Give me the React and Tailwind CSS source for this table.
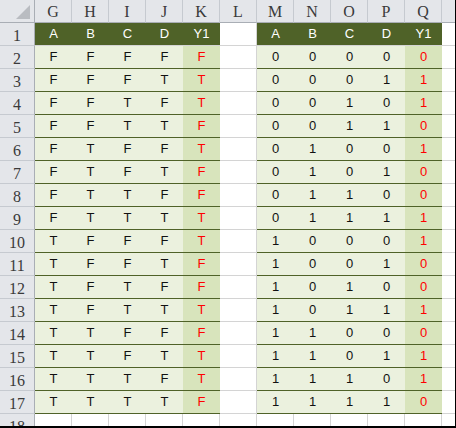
import React from "react";

const LEFT = [
  "FFFFF","FFFTT","FFTFT","FFTTF","FTFFT","FTFTF","FTTFF","FTTTT",
  "TFFFT","TFFTF","TFTFF","TFTTT","TTFFF","TTFTT","TTTFT","TTTTF",
];
const COLS = ["G","H","I","J","K","L","M","N","O","P","Q",""];
const HEAD = ["A","B","C","D","Y1"];

function HeadCell({ children }) {
  return (
    <div className="w-[37px] h-[23px] shrink-0 box-border border-r border-b border-r-[#c6cad0] border-b-[#a9aeb5] bg-[#e4e6ea] flex items-center justify-center pt-[2px] text-[16px] text-[#3a3a3a] [font-family:'Liberation_Serif',serif]">
      {children}
    </div>
  );
}

function RowNum({ n }) {
  return (
    <div className="w-[35px] h-[23px] shrink-0 box-border border-r border-b border-r-[#a9aeb5] border-b-[#c6cad0] bg-[#e4e6ea] flex items-center justify-center pt-[4px] text-[16px] text-[#3a3a3a] [font-family:'Liberation_Serif',serif]">
      {n}
    </div>
  );
}

function Blank() {
  return <div className="w-[37px] h-[23px] shrink-0 box-border border-r border-b border-[#d4d4d4] bg-white" />;
}

function DarkCell({ children }) {
  return (
    <div className="w-[37px] h-[23px] shrink-0 box-border border-b border-b-[#d4d4d4] bg-[#4f6228] flex items-center justify-center text-[13px] text-white [font-family:'Liberation_Sans',sans-serif]">
      {children}
    </div>
  );
}

function DataCell({ children, y }) {
  return (
    <div
      className={
        y
          ? "w-[37px] h-[23px] shrink-0 box-border border-b border-b-[#4f6228] bg-[#d8e4bc] flex items-center justify-center text-[13px] text-[#ff0000] [font-family:'Liberation_Sans',sans-serif]"
          : "w-[37px] h-[23px] shrink-0 box-border border-b border-b-[#4f6228] bg-[#ebf1de] flex items-center justify-center text-[13px] text-[#111] [font-family:'Liberation_Sans',sans-serif]"
      }
    >
      {children}
    </div>
  );
}

function Table({ row, numeric }) {
  if (row === 1) {
    return HEAD.map((h) => <DarkCell key={h}>{h}</DarkCell>);
  }
  if (row >= 2 && row <= 17) {
    const s = LEFT[row - 2];
    return s.split("").map((c, i) => (
      <DataCell key={i} y={i === 4}>
        {numeric ? (c === "T" ? "1" : "0") : c}
      </DataCell>
    ));
  }
  return [0, 1, 2, 3, 4].map((i) => <Blank key={i} />);
}

export default function App() {
  const rows = Array.from({ length: 18 }, (_, i) => i + 1);
  return (
    <div className="w-[456px] h-[428px] box-border border-r border-b-2 border-black overflow-hidden bg-white">
      <div className="flex w-max">
        <div className="w-[35px] h-[23px] shrink-0 box-border border-r border-b border-r-[#a9aeb5] border-b-[#a9aeb5] bg-[#e4e6ea] relative">
          <svg className="absolute left-[16px] top-[5px]" width="14" height="14" viewBox="0 0 14 14">
            <polygon points="14,0 14,14 0,14" fill="#b9bcc1" />
          </svg>
        </div>
        {COLS.map((c, i) => (
          <HeadCell key={i}>{c}</HeadCell>
        ))}
      </div>
      {rows.map((r) => (
        <div key={r} className="flex w-max">
          <RowNum n={r} />
          <Table row={r} numeric={false} />
          <Blank />
          <Table row={r} numeric={true} />
          <Blank />
        </div>
      ))}
    </div>
  );
}
